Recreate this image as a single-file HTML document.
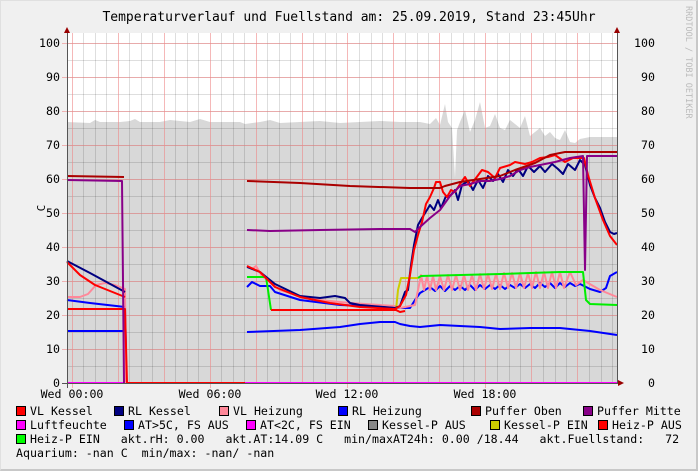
<!DOCTYPE html>
<html><head><meta charset="utf-8"><style>
html,body{margin:0;padding:0}
body{width:698px;height:471px;background:#f0f0f0;position:relative;overflow:hidden;font-family:"DejaVu Sans Mono","Liberation Mono",monospace;color:#000}
.t{position:absolute;font-size:11.6px;white-space:pre;line-height:14px}
.sq{position:absolute;width:8px;height:8px;border:1px solid #000}
</style></head><body>
<div style="position:absolute;left:0;top:0;width:696px;height:469px;border-right:2px solid #c8c8c8;border-bottom:2px solid #c8c8c8;border-left:1px solid #e0e0e0;border-top:1px solid #e0e0e0;box-sizing:border-box;width:698px;height:471px"></div>
<svg width="698" height="471" style="position:absolute;left:0;top:0" font-family="DejaVu Sans Mono, monospace">
<text x="349" y="21" font-size="13" text-anchor="middle">Temperaturverlauf und Fuellstand am: 25.09.2019, Stand 23:45Uhr</text>
<text x="686" y="6" font-size="8.5" fill="#bbb" transform="rotate(90 686 6)">RRDTOOL / TOBI OETIKER</text>
<text x="45" y="208" font-size="11" transform="rotate(-90 45 208)" text-anchor="middle">C</text>
<rect x="67" y="33" width="550" height="350" fill="#fff"/>
<polygon fill="#d8d8d8" points="67,383 67,122 90,123 95,120 100,122 120,122 130,121 135,119 140,122 160,122 170,120 190,122 200,119 210,122 240,122 245,124 260,122 270,120 280,123 300,122 320,121 340,123 360,122 380,121 400,122 420,122 430,124 436,118 440,125 445,104 448,122 452,128 455,178 457,130 460,122 465,110 470,132 475,120 480,102 485,128 490,126 495,114 500,128 505,130 510,120 520,128 525,116 530,136 540,128 545,136 550,132 555,138 560,140 565,130 570,142 575,143 580,139 585,138 590,137 617,137 617,383"/>
<g stroke="#000" stroke-opacity="0.13" stroke-width="1">
<path d="M67,366.5H617M67,349.5H617M67,332.5H617M67,315.5H617M67,298.5H617M67,281.5H617M67,264.5H617M67,247.5H617M67,230.5H617M67,213.5H617M67,196.5H617M67,179.5H617M67,162.5H617M67,145.5H617M67,128.5H617M67,111.5H617M67,94.5H617M67,77.5H617M67,60.5H617M67,43.5H617"/>
<path d="M83.5,33V383M95.5,33V383M106.5,33V383M129.5,33V383M141.5,33V383M152.5,33V383M175.5,33V383M187.5,33V383M198.5,33V383M221.5,33V383M233.5,33V383M244.5,33V383M267.5,33V383M279.5,33V383M290.5,33V383M313.5,33V383M325.5,33V383M336.5,33V383M359.5,33V383M371.5,33V383M382.5,33V383M405.5,33V383M417.5,33V383M428.5,33V383M451.5,33V383M463.5,33V383M474.5,33V383M497.5,33V383M509.5,33V383M520.5,33V383M543.5,33V383M555.5,33V383M566.5,33V383M589.5,33V383M601.5,33V383M612.5,33V383"/>
</g>
<g stroke="#e88" stroke-opacity="0.6" stroke-width="1">
<path d="M62,383.5H617M62,349.5H617M62,315.5H617M62,281.5H617M62,247.5H617M62,213.5H617M62,179.5H617M62,145.5H617M62,111.5H617M62,77.5H617M62,43.5H617"/>
<path d="M72.5,33V388M118.5,33V383M164.5,33V383M210.5,33V388M256.5,33V383M302.5,33V383M347.5,33V388M393.5,33V383M439.5,33V383M485.5,33V388M531.5,33V383M577.5,33V383"/>
</g>
<g fill="none" stroke-width="2" stroke-linejoin="round">
<polyline stroke="#ff00ff" points="67,383 617,383"/>
<polyline stroke="#0000ff" points="67,331 125,331 M"/>
<polyline stroke="#0000ff" points="247,332 300,330 340,327 360,324 380,322 395,322 400,324 410,326 420,327 440,325 460,326 480,327 500,329 530,328 560,328 590,331 617,335"/>
<polyline stroke="#0000ff" points="67,300 90,303 125,307 126,350"/>
<polyline stroke="#0000ff" points="247,287 252,282 260,286 270,286 275,292 300,300 340,305 395,307 400,308 410,308 415,300 420,293 425,290 430,287 435,291 440,286 445,291 450,286 455,290 460,286 465,290 470,285 475,290 480,285 485,289 490,285 495,289 500,285 505,289 510,285 515,288 520,284 525,288 530,284 535,288 540,283 545,287 550,283 555,288 560,283 565,287 570,283 575,286 580,284 590,289 600,292 606,288 610,276 617,272"/>
<polyline stroke="#ff8899" points="67,297 80,297 88,294 96,285 105,283 115,285 125,289 126,383"/>
<polyline stroke="#ff8899" points="247,266 252,269 256,266 262,276 280,290 310,299 350,303 395,306 400,308 415,305 418,290 421,275 424,290 427,276 430,290 433,276 436,290 440,276 444,290 448,275 452,290 456,275 460,290 464,275 468,290 472,275 476,290 480,274 484,289 488,274 492,289 496,274 500,289 504,273 508,288 512,273 516,288 520,273 524,288 528,273 532,288 536,272 540,288 544,272 548,288 552,272 556,288 560,272 564,288 570,272 576,285 583,280 600,290 617,297"/>
<polyline stroke="#00ee00" points="247,277 266,277 268,290 271,310"/>
<polyline stroke="#cccc00" points="396,310 398,290 401,278 418,278"/>
<polyline stroke="#00ee00" points="418,278 421,276 500,274 560,272 583,272 586,300 590,304 617,305"/>
<polyline stroke="#ff0000" points="67,309 125,309 127,383 245,383"/>
<polyline stroke="#ff0000" points="271,310 330,310 396,310 400,312 405,311"/>
<polyline stroke="#000080" points="67,261 90,273 125,292"/>
<polyline stroke="#000080" points="247,267 260,272 275,284 300,296 320,298 335,296 345,298 350,303 360,305 395,308 400,306 405,292 408,290 411,265 414,245 418,225 422,218 427,210 430,205 434,210 438,200 441,208 446,196 450,196 455,190 458,200 462,185 468,181 473,190 478,180 483,188 488,176 493,181 498,174 503,182 508,170 513,176 518,169 523,176 528,166 534,172 540,166 545,172 552,164 558,169 563,174 568,164 575,170 580,160 585,165 590,185 595,198 600,208 605,222 610,232 614,234 617,233"/>
<polyline stroke="#ff0000" points="67,262 80,275 95,285 110,291 125,297"/>
<polyline stroke="#ff0000" points="247,266 260,272 275,287 300,297 330,303 360,307 395,309 400,306 406,295 410,275 414,250 418,235 422,222 426,204 430,197 434,188 436,182 440,182 443,192 447,197 451,190 455,192 460,184 465,177 470,186 476,178 482,170 488,172 495,178 500,168 510,165 515,162 525,164 532,162 540,158 548,157 555,155 565,162 573,158 580,158 584,158 588,175 595,198 603,220 610,236 617,245"/>
<polyline stroke="#880088" points="67,180 122,181 124,383"/>
<polyline stroke="#880088" points="247,230 270,231 320,230 380,229 410,229 415,232 420,227 430,218 440,210 450,196 460,186 470,184 480,181 490,181 500,179 510,176 520,170 530,167 540,165 555,162 570,158 583,156 585,270 587,156 617,156"/>
<polyline stroke="#aa0000" points="67,176 124,177"/>
<polyline stroke="#aa0000" points="247,181 300,183 350,186 410,188 440,188 445,186 460,182 480,179 500,176 515,170 535,163 550,155 565,152 617,152"/>
</g>
<g stroke="#555" stroke-width="1"><path d="M67.5,33V388M62,383.5H622"/></g>
<polygon points="64,33 70,33 67,27" fill="#900"/>
<polygon points="618,380 618,386 624,383" fill="#900"/>
<polygon points="614,33 620,33 617,27" fill="#900"/>
<path d="M617.5,33V383" stroke="#555"/>
<g font-size="11.6" text-anchor="end">
<text x="60" y="47">100</text><text x="60" y="81">90</text><text x="60" y="115">80</text><text x="60" y="149">70</text><text x="60" y="183">60</text><text x="60" y="217">50</text><text x="60" y="251">40</text><text x="60" y="285">30</text><text x="60" y="319">20</text><text x="60" y="353">10</text><text x="60" y="387">0</text>
<text x="655" y="47">100</text><text x="655" y="81">90</text><text x="655" y="115">80</text><text x="655" y="149">70</text><text x="655" y="183">60</text><text x="655" y="217">50</text><text x="655" y="251">40</text><text x="655" y="285">30</text><text x="655" y="319">20</text><text x="655" y="353">10</text><text x="655" y="387">0</text>
</g>
<g font-size="11.6" text-anchor="middle">
<text x="72" y="398">Wed 00:00</text><text x="210" y="398">Wed 06:00</text><text x="347" y="398">Wed 12:00</text><text x="485" y="398">Wed 18:00</text>
</g>
</svg>
<div class="sq" style="left:16px;top:406px;background:#f00"></div><div class="t" style="left:30px;top:404px">VL Kessel</div>
<div class="sq" style="left:114px;top:406px;background:#000080"></div><div class="t" style="left:128px;top:404px">RL Kessel</div>
<div class="sq" style="left:219px;top:406px;background:#ff8899"></div><div class="t" style="left:233px;top:404px">VL Heizung</div>
<div class="sq" style="left:338px;top:406px;background:#00f"></div><div class="t" style="left:352px;top:404px">RL Heizung</div>
<div class="sq" style="left:471px;top:406px;background:#aa0000"></div><div class="t" style="left:485px;top:404px">Puffer Oben</div>
<div class="sq" style="left:583px;top:406px;background:#880088"></div><div class="t" style="left:597px;top:404px">Puffer Mitte</div>
<div class="sq" style="left:16px;top:420px;background:#f0f"></div><div class="t" style="left:30px;top:418px">Luftfeuchte</div>
<div class="sq" style="left:124px;top:420px;background:#00f"></div><div class="t" style="left:138px;top:418px">AT&gt;5C, FS AUS</div>
<div class="sq" style="left:246px;top:420px;background:#f0f"></div><div class="t" style="left:260px;top:418px">AT&lt;2C, FS EIN</div>
<div class="sq" style="left:368px;top:420px;background:#888"></div><div class="t" style="left:382px;top:418px">Kessel-P AUS</div>
<div class="sq" style="left:490px;top:420px;background:#cc0"></div><div class="t" style="left:504px;top:418px">Kessel-P EIN</div>
<div class="sq" style="left:598px;top:420px;background:#f00"></div><div class="t" style="left:612px;top:418px">Heiz-P AUS</div>
<div class="sq" style="left:16px;top:434px;background:#0f0"></div><div class="t" style="left:30px;top:432px">Heiz-P EIN   akt.rH: 0.00   akt.AT:14.09 C   min/maxAT24h: 0.00 /18.44   akt.Fuellstand:   72</div>
<div class="t" style="left:16px;top:446px">Aquarium: -nan C  min/max: -nan/ -nan</div>
</body></html>
